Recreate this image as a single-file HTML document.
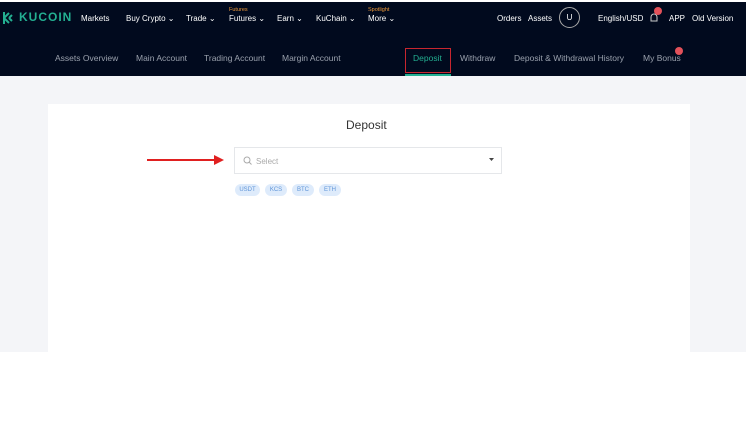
<!DOCTYPE html>
<html><head><style>
*{margin:0;padding:0;box-sizing:border-box}
body{width:748px;height:421px;background:#fff;font-family:"Liberation Sans",sans-serif;position:relative;overflow:hidden}
.nav{position:absolute;left:0;top:2px;width:746px;height:74px;background:#010a1e}
.t{position:absolute;color:#fff;font-size:8px;white-space:nowrap}
.s{position:absolute;color:#9aa1ad;font-size:8.5px;white-space:nowrap;top:51px}
.o{position:absolute;color:#f09a3a;font-size:5.5px}
.gray{position:absolute;left:0;top:76px;width:746px;height:276px;background:#f4f5f8}
.card{position:absolute;left:48px;top:104px;width:642px;height:248px;background:#fff}
.chip{position:absolute;top:184px;height:12px;border-radius:6px;background:#deebfb;color:#5f95d8;font-size:6px;line-height:12px;text-align:center}
.dot{position:absolute;width:8px;height:8px;border-radius:50%;background:#e2515a}
</style></head><body>
<div class="nav">
<svg style="position:absolute;left:2px;top:9px" width="14" height="14" viewBox="0 0 14 14"><path d="M2 1v12M2 7l5-5M2 7l5 5M7 7l3-3M7 7l3 3" stroke="#23af91" stroke-width="2" fill="none"/></svg>
<div class="t" style="left:19px;top:8px;font-size:12px;font-weight:bold;color:#23af91;letter-spacing:1px">KUCOIN</div>
<div class="t" style="left:81px;top:12px">Markets</div>
<div class="t" style="left:126px;top:12px">Buy Crypto ⌄</div>
<div class="t" style="left:186px;top:12px">Trade ⌄</div>
<div class="o" style="left:229px;top:5px">Futures</div>
<div class="t" style="left:229px;top:12px">Futures ⌄</div>
<div class="t" style="left:277px;top:12px">Earn ⌄</div>
<div class="t" style="left:316px;top:12px">KuChain ⌄</div>
<div class="o" style="left:368px;top:5px">Spotlight</div>
<div class="t" style="left:368px;top:12px">More ⌄</div>
<div class="t" style="left:497px;top:12px">Orders</div>
<div class="t" style="left:528px;top:12px">Assets</div>
<div style="position:absolute;left:559px;top:5px;width:21px;height:21px;border:1px solid #aaa;border-radius:50%;color:#fff;font-size:8px;text-align:center;line-height:19px">U</div>
<div class="t" style="left:598px;top:12px">English/USD</div>
<svg style="position:absolute;left:649px;top:10px" width="10" height="12"><path d="M2 9V5a3 3 0 016 0v4H1.5h7" stroke="#ccc" fill="none"/></svg>
<div class="dot" style="left:654px;top:5px"></div>
<div class="t" style="left:669px;top:12px">APP</div>
<div class="t" style="left:692px;top:12px">Old Version</div>
<div class="s" style="left:55px">Assets Overview</div>
<div class="s" style="left:136px">Main Account</div>
<div class="s" style="left:204px">Trading Account</div>
<div class="s" style="left:282px">Margin Account</div>
<div style="position:absolute;left:405px;top:46px;width:46px;height:25px;border:1.5px solid #c8262f"></div>
<div class="s" style="left:413px;color:#23af91">Deposit</div>
<div style="position:absolute;left:405px;top:72px;width:46px;height:2px;background:#23af91"></div>
<div class="s" style="left:460px">Withdraw</div>
<div class="s" style="left:514px">Deposit &amp; Withdrawal History</div>
<div class="s" style="left:643px">My Bonus</div>
<div class="dot" style="left:675px;top:45px"></div>
</div>
<div class="gray"></div>
<div class="card"></div>
<div style="position:absolute;left:346px;top:118px;font-size:12px;color:#333">Deposit</div>
<div style="position:absolute;left:147px;top:159px;width:70px;height:1.5px;background:#e02020"></div>
<svg style="position:absolute;left:214px;top:155px" width="10" height="10"><path d="M0 0L10 5L0 10Z" fill="#e02020"/></svg>
<div style="position:absolute;left:234px;top:147px;width:268px;height:27px;border:1px solid #e5e7ea;background:#fff"></div>
<svg style="position:absolute;left:243px;top:156px" width="9" height="9"><circle cx="4" cy="4" r="3" stroke="#aaa" fill="none"/><path d="M6 6l2.5 2.5" stroke="#aaa"/></svg>
<div style="position:absolute;left:256px;top:157px;font-size:8px;color:#aaa">Select</div>
<svg style="position:absolute;left:489px;top:158px" width="6" height="4"><path d="M0 0h5L2.5 3Z" fill="#444"/></svg>
<div class="chip" style="left:235px;width:25px">USDT</div>
<div class="chip" style="left:265px;width:22px">KCS</div>
<div class="chip" style="left:292px;width:22px">BTC</div>
<div class="chip" style="left:319px;width:22px">ETH</div>
</body></html>
